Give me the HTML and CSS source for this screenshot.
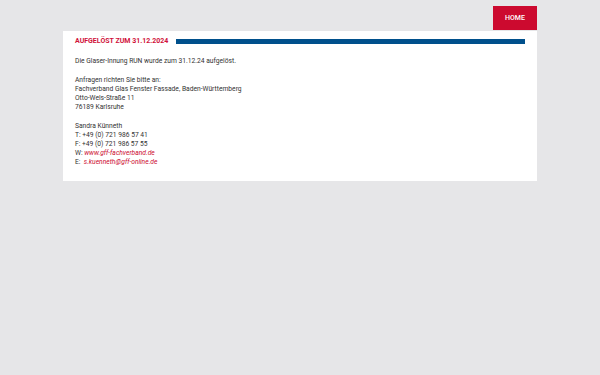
FILE: index.html
```html
<!DOCTYPE html>
<html lang="de">
<head>
    <meta charset="UTF-8">
    <meta name="viewport" content="width=device-width, initial-scale=1.0">
    <title>Glaser-Innung RUN</title>
    <link rel="stylesheet" href="styles.css">
</head>
<body>

<div class="page">
    <div class="topnav">
        <a class="home-btn" href="#">HOME</a>
    </div>

    <div class="content">
        <div class="headline">
            <h1>AUFGELÖST ZUM 31.12.2024</h1>
            <span class="headline-bar"></span>
        </div>

        <p>Die Glaser-Innung RUN wurde zum 31.12.24 aufgelöst.</p>

        <p>
            Anfragen richten Sie bitte an:<br>
            Fachverband Glas Fenster Fassade, Baden-Württemberg<br>
            Otto-Wels-Straße 11<br>
            76189 Karlsruhe
        </p>

        <p>
            Sandra Künneth<br>
            T: +49 (0) 721 986 57 41<br>
            F: +49 (0) 721 986 57 55<br>
            W: <a class="link" href="#">www.gff-fachverband.de</a><br>
            E:&nbsp; <a class="link" href="#">s.kuenneth@gff-online.de</a>
        </p>
    </div>
</div>

</body>
</html>
```

FILE: styles.css
```css
body {
    font-family: Roboto, "Liberation Sans", sans-serif;
    background-color: #e6e6e8;
    margin: 0;
    color: #333;
}
.page {
    width: 474px;
    margin: 0 auto;
}
.topnav {
    display: flex;
    justify-content: flex-end;
    padding-top: 6px;
}
.home-btn {
    background-color: #cc0a2f;
    color: #fff;
    font-size: 7px;
    font-weight: 500;
    text-decoration: none;
    width: 44px;
    height: 24px;
    line-height: 24px;
    text-align: center;
}
.content {
    background-color: #fff;
    margin-top: 1px;
    padding: 4px 12px 14px 12px;
}
.headline {
    display: flex;
    align-items: center;
    gap: 8px;
    margin-bottom: 10px;
}
h1 {
    margin: 0;
    font-size: 7px;
    font-weight: 700;
    color: #d0103a;
    line-height: 12px;
    white-space: nowrap;
}
.headline-bar {
    flex: 1;
    height: 5px;
    background-color: #00508c;
}
p {
    margin: 0 0 10px 0;
    font-size: 6.7px;
    line-height: 9px;
}
p:last-child {
    margin-bottom: 0;
}
.link {
    color: #cc0a2f;
    font-style: italic;
    text-decoration: none;
}
```
